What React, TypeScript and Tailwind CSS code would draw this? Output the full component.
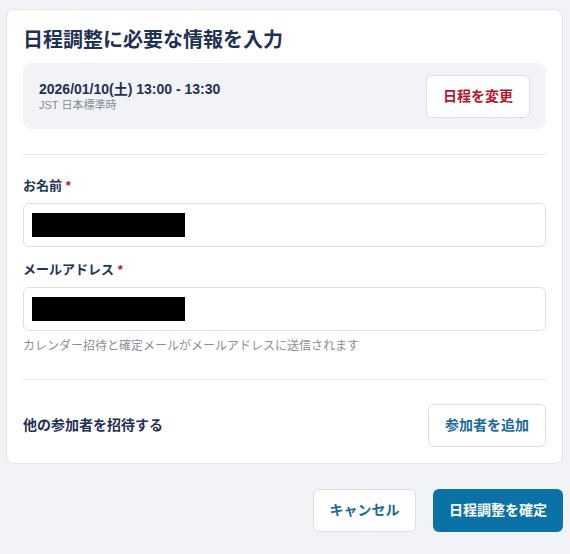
import React from "react";

const font = { fontFamily: '"Liberation Sans", "Noto Sans CJK JP", sans-serif' };

function Field({ label }: { label: string }) {
  return (
    <div>
      <label className="block text-[13px] font-bold leading-5 text-[#243553]">
        {label} <span className="text-[#a4212f]">*</span>
      </label>
      <div className="mt-[7px] flex h-[44px] items-center rounded-md border border-[#dcdfe5] bg-white px-2">
        <div className="h-6 w-[153px] bg-black"></div>
      </div>
    </div>
  );
}

export default function App() {
  return (
    <div
      className="min-h-screen bg-[#f1f3f7] pl-[6px] pr-[7px] pt-[9px] pb-6 text-[#243553]"
      style={font}
    >
      <div className="rounded-lg border border-[#e3e6ec] bg-white p-4">
        <h1 className="text-[20px] font-bold leading-7 text-[#1f3154]">
          日程調整に必要な情報を入力
        </h1>

        <div className="mt-[9px] flex h-[66px] items-center justify-between rounded-lg bg-[#f1f3f7] px-4">
          <div>
            <p className="text-[14px] font-bold leading-[18px] text-[#1f3154]">
              2026/01/10(土) 13:00 - 13:30
            </p>
            <p className="text-[11px] leading-[14px] text-[#858b96]">JST 日本標準時</p>
          </div>
          <button className="h-[43px] w-[104px] rounded-md border border-[#dcdfe5] bg-white text-[14px] font-bold text-[#b3162e]">
            日程を変更
          </button>
        </div>

        <div className="mt-[25px] border-t border-[#e3e6ec]"></div>

        <div className="mt-[21px] flex flex-col gap-[13px]">
          <Field label="お名前" />
          <Field label="メールアドレス" />
        </div>
        <p className="mt-[7px] text-[12px] leading-4 text-[#8a8f99]">
          カレンダー招待と確定メールがメールアドレスに送信されます
        </p>

        <div className="mt-[25px] border-t border-[#e3e6ec]"></div>

        <div className="mt-[24px] flex items-center justify-between">
          <p className="text-[14px] font-bold text-[#1f3154]">他の参加者を招待する</p>
          <button className="h-[43px] w-[118px] rounded-md border border-[#dcdfe5] bg-white text-[14px] font-bold text-[#1a6a99]">
            参加者を追加
          </button>
        </div>
      </div>

      <div className="mt-[25px] flex justify-end gap-[17px] pr-0">
        <button className="h-[43px] w-[103px] rounded-md border border-[#dcdfe5] bg-white text-[14px] font-bold text-[#1a6a99]">
          キャンセル
        </button>
        <button className="h-[43px] w-[130px] rounded-md bg-[#0b72a8] text-[14px] font-bold text-white">
          日程調整を確定
        </button>
      </div>
    </div>
  );
}
